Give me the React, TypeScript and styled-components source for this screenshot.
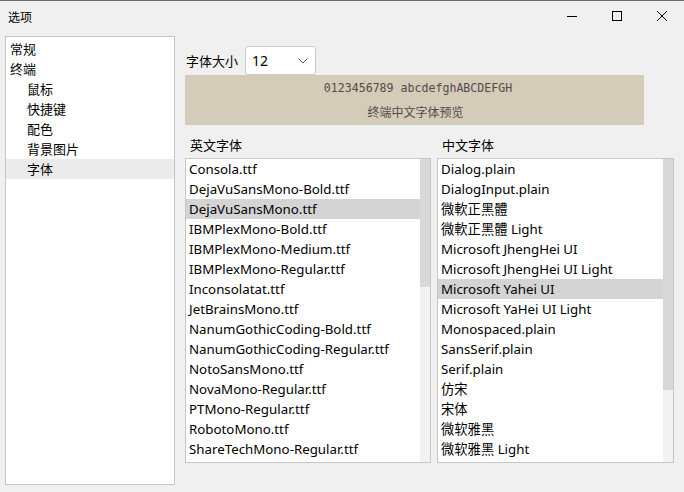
import React from 'react';
import styled, { createGlobalStyle } from 'styled-components';

const GlobalStyle = createGlobalStyle`
    html, body {
        margin: 0;
        padding: 0;
        background: #f0f0f0;
    }
    body {
        font-family: "Noto Sans", "Noto Sans CJK SC", sans-serif;
        color: #000;
    }
`;

const Window = styled.div`
    width: 684px;
    height: 492px;
    box-sizing: border-box;
    border-top: 1px solid #6b6b6b;
    background: #f0f0f0;
    display: flex;
    flex-direction: column;
    overflow: hidden;
`;

const TitleBar = styled.div`
    height: 35px;
    display: flex;
    align-items: center;
    justify-content: space-between;
    padding-left: 8px;
    box-sizing: border-box;
`;

const Title = styled.span`
    font-family: "Noto Sans CJK SC", sans-serif;
    font-size: 12px;
    margin-top: -5px;
`;

const Controls = styled.div`
    display: flex;
    height: 100%;
    margin-top: -5px;
`;

const ControlButton = styled.div`
    width: 45px;
    height: 100%;
    display: flex;
    align-items: center;
    justify-content: center;
`;

const Body = styled.div`
    flex: 1;
    display: flex;
    padding-left: 5px;
    gap: 10px;
    padding-bottom: 7px;
`;

const TreePanel = styled.div`
    width: 170px;
    box-sizing: border-box;
    border: 1px solid #c6c6c6;
    background: #fff;
    padding-top: 2px;
    font-family: "Noto Sans CJK SC", sans-serif;
    font-size: 13px;
`;

const TreeRow = styled.div<{ $indent?: boolean; $selected?: boolean }>`
    height: 20px;
    line-height: 20px;
    padding-left: ${(p) => (p.$indent ? '21px' : '4px')};
    background: ${(p) => (p.$selected ? '#ebebeb' : 'transparent')};
`;

const RightPane = styled.div`
    width: 489px;
    display: flex;
    flex-direction: column;
`;

const SizeRow = styled.div`
    display: flex;
    align-items: center;
    gap: 7px;
    padding-top: 10px;
    height: 29px;
`;

const Label = styled.span`
    font-family: "Noto Sans CJK SC", sans-serif;
    font-size: 13px;
    padding-left: 1px;
`;

const Select = styled.div`
    width: 71px;
    height: 29px;
    box-sizing: border-box;
    border: 1px solid #cacaca;
    border-radius: 3px;
    background: #fff;
    display: flex;
    align-items: center;
    justify-content: space-between;
    padding: 0 7px 0 6px;
    font-size: 14px;
`;

const Preview = styled.div`
    width: 459px;
    height: 50px;
    background: #d4cbb8;
    color: #564a4a;
    display: flex;
    flex-direction: column;
    align-items: center;
`;

const MonoLine = styled.div`
    font-family: "DejaVu Sans Mono", monospace;
    font-size: 11.6px;
    line-height: 14px;
    margin-top: 6px;
    padding-left: 7px;
`;

const CjkLine = styled.div`
    font-family: "Noto Sans CJK SC", sans-serif;
    font-size: 12px;
    line-height: 14px;
    margin-top: 10px;
    padding-left: 2px;
`;

const Lists = styled.div`
    display: flex;
    gap: 6px;
    margin-top: 10px;
`;

const ListColumn = styled.div<{ $width: number }>`
    width: ${(p) => p.$width}px;
    display: flex;
    flex-direction: column;
`;

const ListTitle = styled.div`
    font-family: "Noto Sans CJK SC", sans-serif;
    font-size: 13px;
    height: 23px;
    line-height: 19px;
    padding-left: 5px;
`;

const ListBox = styled.div`
    height: 305px;
    box-sizing: border-box;
    border: 1px solid #c6c6c6;
    background: #fff;
    display: flex;
    overflow: hidden;
`;

const Items = styled.div`
    flex: 1;
    overflow: hidden;
`;

const Item = styled.div<{ $selected?: boolean }>`
    height: 20px;
    line-height: 21px;
    padding-left: 3px;
    font-size: 13.3px;
    white-space: nowrap;
    background: ${(p) => (p.$selected ? '#d4d4d4' : 'transparent')};
`;

const Track = styled.div`
    width: 10px;
    background: #f2f2f2;
`;

const Thumb = styled.div`
    background: #d8d8d8;
`;

const englishFonts = [
    'Consola.ttf',
    'DejaVuSansMono-Bold.ttf',
    'DejaVuSansMono.ttf',
    'IBMPlexMono-Bold.ttf',
    'IBMPlexMono-Medium.ttf',
    'IBMPlexMono-Regular.ttf',
    'Inconsolatat.ttf',
    'JetBrainsMono.ttf',
    'NanumGothicCoding-Bold.ttf',
    'NanumGothicCoding-Regular.ttf',
    'NotoSansMono.ttf',
    'NovaMono-Regular.ttf',
    'PTMono-Regular.ttf',
    'RobotoMono.ttf',
    'ShareTechMono-Regular.ttf',
];

const chineseFonts = [
    'Dialog.plain',
    'DialogInput.plain',
    '微軟正黑體',
    '微軟正黑體 Light',
    'Microsoft JhengHei UI',
    'Microsoft JhengHei UI Light',
    'Microsoft Yahei UI',
    'Microsoft YaHei UI Light',
    'Monospaced.plain',
    'SansSerif.plain',
    'Serif.plain',
    '仿宋',
    '宋体',
    '微软雅黑',
    '微软雅黑 Light',
];

type FontListProps = {
    title: string;
    width: number;
    items: string[];
    selected: string;
    thumb: number;
};

const FontList: React.FC<FontListProps> = ({ title, width, items, selected, thumb }) => (
    <ListColumn $width={width}>
        <ListTitle>{title}</ListTitle>
        <ListBox>
            <Items>
                {items.map((name) => (
                    <Item key={name} $selected={name === selected}>{name}</Item>
                ))}
            </Items>
            <Track>
                <Thumb style={{ height: thumb }} />
            </Track>
        </ListBox>
    </ListColumn>
);

const treeItems = [
    { label: '常规' },
    { label: '终端' },
    { label: '鼠标', indent: true },
    { label: '快捷键', indent: true },
    { label: '配色', indent: true },
    { label: '背景图片', indent: true },
    { label: '字体', indent: true, selected: true },
];

const App: React.FC = () => {
    return (
        <Window>
            <GlobalStyle />
            <TitleBar>
                <Title>选项</Title>
                <Controls>
                    <ControlButton>
                        <svg width="10" height="10" viewBox="0 0 10 10">
                            <path d="M0 5.5h10" stroke="#000" strokeWidth="1" />
                        </svg>
                    </ControlButton>
                    <ControlButton>
                        <svg width="10" height="10" viewBox="0 0 10 10">
                            <rect x="0.5" y="0.5" width="9" height="9" fill="none" stroke="#000" strokeWidth="1" />
                        </svg>
                    </ControlButton>
                    <ControlButton>
                        <svg width="10" height="10" viewBox="0 0 10 10">
                            <path d="M0 0L10 10M10 0L0 10" stroke="#000" strokeWidth="1" />
                        </svg>
                    </ControlButton>
                </Controls>
            </TitleBar>
            <Body>
                <TreePanel>
                    {treeItems.map((t) => (
                        <TreeRow key={t.label} $indent={t.indent} $selected={t.selected}>{t.label}</TreeRow>
                    ))}
                </TreePanel>
                <RightPane>
                    <SizeRow>
                        <Label>字体大小</Label>
                        <Select>
                            <span>12</span>
                            <svg width="10" height="6" viewBox="0 0 10 6">
                                <path d="M0.5 0.5L5 5L9.5 0.5" fill="none" stroke="#555" strokeWidth="1" />
                            </svg>
                        </Select>
                    </SizeRow>
                    <Preview>
                        <MonoLine>0123456789 abcdefghABCDEFGH</MonoLine>
                        <CjkLine>终端中文字体预览</CjkLine>
                    </Preview>
                    <Lists>
                        <FontList title="英文字体" width={246} items={englishFonts} selected="DejaVuSansMono.ttf" thumb={128} />
                        <FontList title="中文字体" width={237} items={chineseFonts} selected="Microsoft Yahei UI" thumb={231} />
                    </Lists>
                </RightPane>
            </Body>
        </Window>
    );
};

export default App;
